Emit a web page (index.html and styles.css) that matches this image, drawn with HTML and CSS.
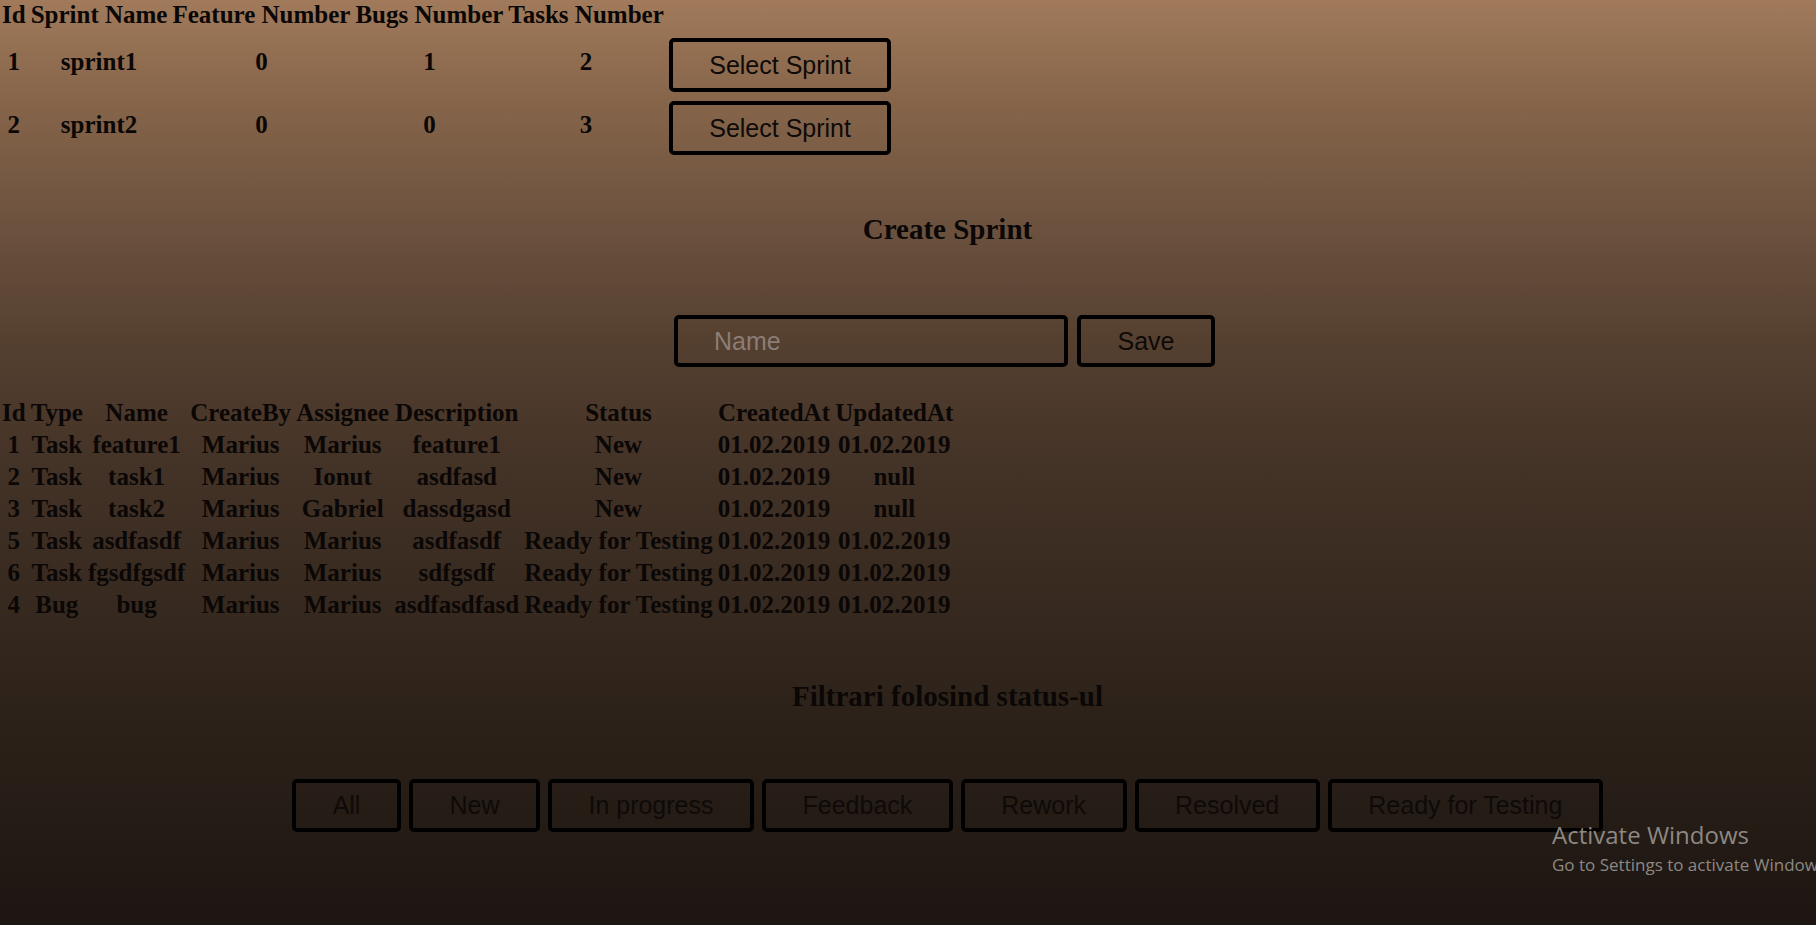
FILE: index.html
```html
<!DOCTYPE html>
<html lang="ro">
<head>
<meta charset="utf-8">
<title>Sprints</title>
<link rel="stylesheet" href="styles.css">
</head>
<body>
<div class="page">
  <table class="sprints">
    <thead>
      <tr><th>Id</th><th>Sprint Name</th><th>Feature Number</th><th>Bugs Number</th><th>Tasks Number</th></tr>
    </thead>
    <tbody>
      <tr><td>1</td><td>sprint1</td><td>0</td><td>1</td><td>2</td><td class="action"><button class="btn btn-select">Select Sprint</button></td></tr>
      <tr><td>2</td><td>sprint2</td><td>0</td><td>0</td><td>3</td><td class="action"><button class="btn btn-select">Select Sprint</button></td></tr>
    </tbody>
  </table>

  <section class="center-block">
    <h3 class="section-title create-title">Create Sprint</h3>
    <form class="create-form">
      <input class="name-input" type="text" placeholder="Name">
      <button class="btn btn-save" type="button">Save</button>
    </form>
  </section>

  <table class="tasks">
    <thead>
      <tr><th>Id</th><th>Type</th><th>Name</th><th>CreateBy</th><th>Assignee</th><th>Description</th><th>Status</th><th>CreatedAt</th><th>UpdatedAt</th></tr>
    </thead>
    <tbody>
      <tr><td>1</td><td>Task</td><td>feature1</td><td>Marius</td><td>Marius</td><td>feature1</td><td>New</td><td>01.02.2019</td><td>01.02.2019</td></tr>
      <tr><td>2</td><td>Task</td><td>task1</td><td>Marius</td><td>Ionut</td><td>asdfasd</td><td>New</td><td>01.02.2019</td><td>null</td></tr>
      <tr><td>3</td><td>Task</td><td>task2</td><td>Marius</td><td>Gabriel</td><td>dassdgasd</td><td>New</td><td>01.02.2019</td><td>null</td></tr>
      <tr><td>5</td><td>Task</td><td>asdfasdf</td><td>Marius</td><td>Marius</td><td>asdfasdf</td><td>Ready for Testing</td><td>01.02.2019</td><td>01.02.2019</td></tr>
      <tr><td>6</td><td>Task</td><td>fgsdfgsdf</td><td>Marius</td><td>Marius</td><td>sdfgsdf</td><td>Ready for Testing</td><td>01.02.2019</td><td>01.02.2019</td></tr>
      <tr><td>4</td><td>Bug</td><td>bug</td><td>Marius</td><td>Marius</td><td>asdfasdfasd</td><td>Ready for Testing</td><td>01.02.2019</td><td>01.02.2019</td></tr>
    </tbody>
  </table>

  <section class="center-block">
    <h3 class="section-title filter-title">Filtrari folosind status-ul</h3>
    <div class="filters">
      <button class="btn btn-filter">All</button>
      <button class="btn btn-filter">New</button>
      <button class="btn btn-filter">In progress</button>
      <button class="btn btn-filter">Feedback</button>
      <button class="btn btn-filter">Rework</button>
      <button class="btn btn-filter">Resolved</button>
      <button class="btn btn-filter">Ready for Testing</button>
    </div>
  </section>

  <div class="watermark">
    <div class="wm-title">Activate Windows</div>
    <div class="wm-sub">Go to Settings to activate Windows.</div>
  </div>
</div>
</body>
</html>
```

FILE: styles.css
```css
body {
  margin: 0;
}

.page {
  position: relative;
  min-height: 100vh;
  overflow: hidden;
  background: linear-gradient(to bottom,
    rgb(161, 122, 91) 0px,
    rgb(134, 101, 74) 100px,
    rgb(107, 81, 62) 230px,
    rgb(85, 64, 48) 340px,
    rgb(68, 51, 39) 460px,
    rgb(46, 35, 26) 700px,
    rgb(28, 21, 17) 925px);
  font-family: "Liberation Serif", "Times New Roman", serif;
  font-size: 25px;
  font-weight: bold;
  color: #0a0706;
}

/* sprint table */
.sprints {
  border-spacing: 3px 3px;
  margin-left: -2px;
}

.sprints th {
  line-height: 22px;
  padding: 1px 1px 6px;
  text-align: center;
}

.sprints td {
  line-height: 28px;
  padding: 1px 1px 8px;
  text-align: center;
  vertical-align: middle;
}

.sprints td.action {
  padding: 1px;
}

/* buttons */
.btn {
  font-family: "Liberation Sans", Arial, sans-serif;
  font-size: 25px;
  font-weight: normal;
  color: #0e0a08;
  background: transparent;
  border: 4px solid #000;
  border-radius: 5px;
  padding: 0 36.5px;
  height: 53px;
  box-sizing: border-box;
  cursor: pointer;
}

.btn-select {
  display: block;
  height: 54px;
  margin: 2px 0;
}

.btn-save {
  height: 52px;
}

/* centered sections */
.center-block {
  padding-left: 79px;
  text-align: center;
}

.section-title {
  font-size: 29px;
  line-height: 34px;
  margin: 0;
}

.create-title {
  padding-top: 51px;
}

.create-form {
  display: flex;
  justify-content: center;
  gap: 9px;
  margin: 69px 0 0;
  padding-right: 6px;
}

.name-input {
  width: 394px;
  height: 52px;
  box-sizing: border-box;
  padding: 0 36px;
  border: 4px solid #000;
  border-radius: 5px;
  background: transparent;
  font-family: "Liberation Sans", Arial, sans-serif;
  font-size: 25px;
  color: #0e0a08;
  outline: none;
}

.name-input::placeholder {
  color: #8a7e76;
}

/* tasks table */
.tasks {
  border-spacing: 3px 2px;
  margin-top: 29px;
  margin-left: -2px;
}

.tasks th,
.tasks td {
  line-height: 28px;
  padding: 1px;
  text-align: center;
  white-space: nowrap;
}

.filter-title {
  padding-top: 57px;
}

.filters {
  display: flex;
  justify-content: center;
  gap: 8px;
  margin-top: 66px;
}

/* OS overlay */
.watermark {
  position: absolute;
  left: 1552px;
  top: 819px;
  font-family: "Open Sans", "Noto Sans", sans-serif;
  font-weight: normal;
  color: #8d8883;
  white-space: nowrap;
}

.wm-title {
  font-size: 24px;
  line-height: 32px;
}

.wm-sub {
  font-size: 17px;
  line-height: 24px;
  margin-top: 2px;
}
```
